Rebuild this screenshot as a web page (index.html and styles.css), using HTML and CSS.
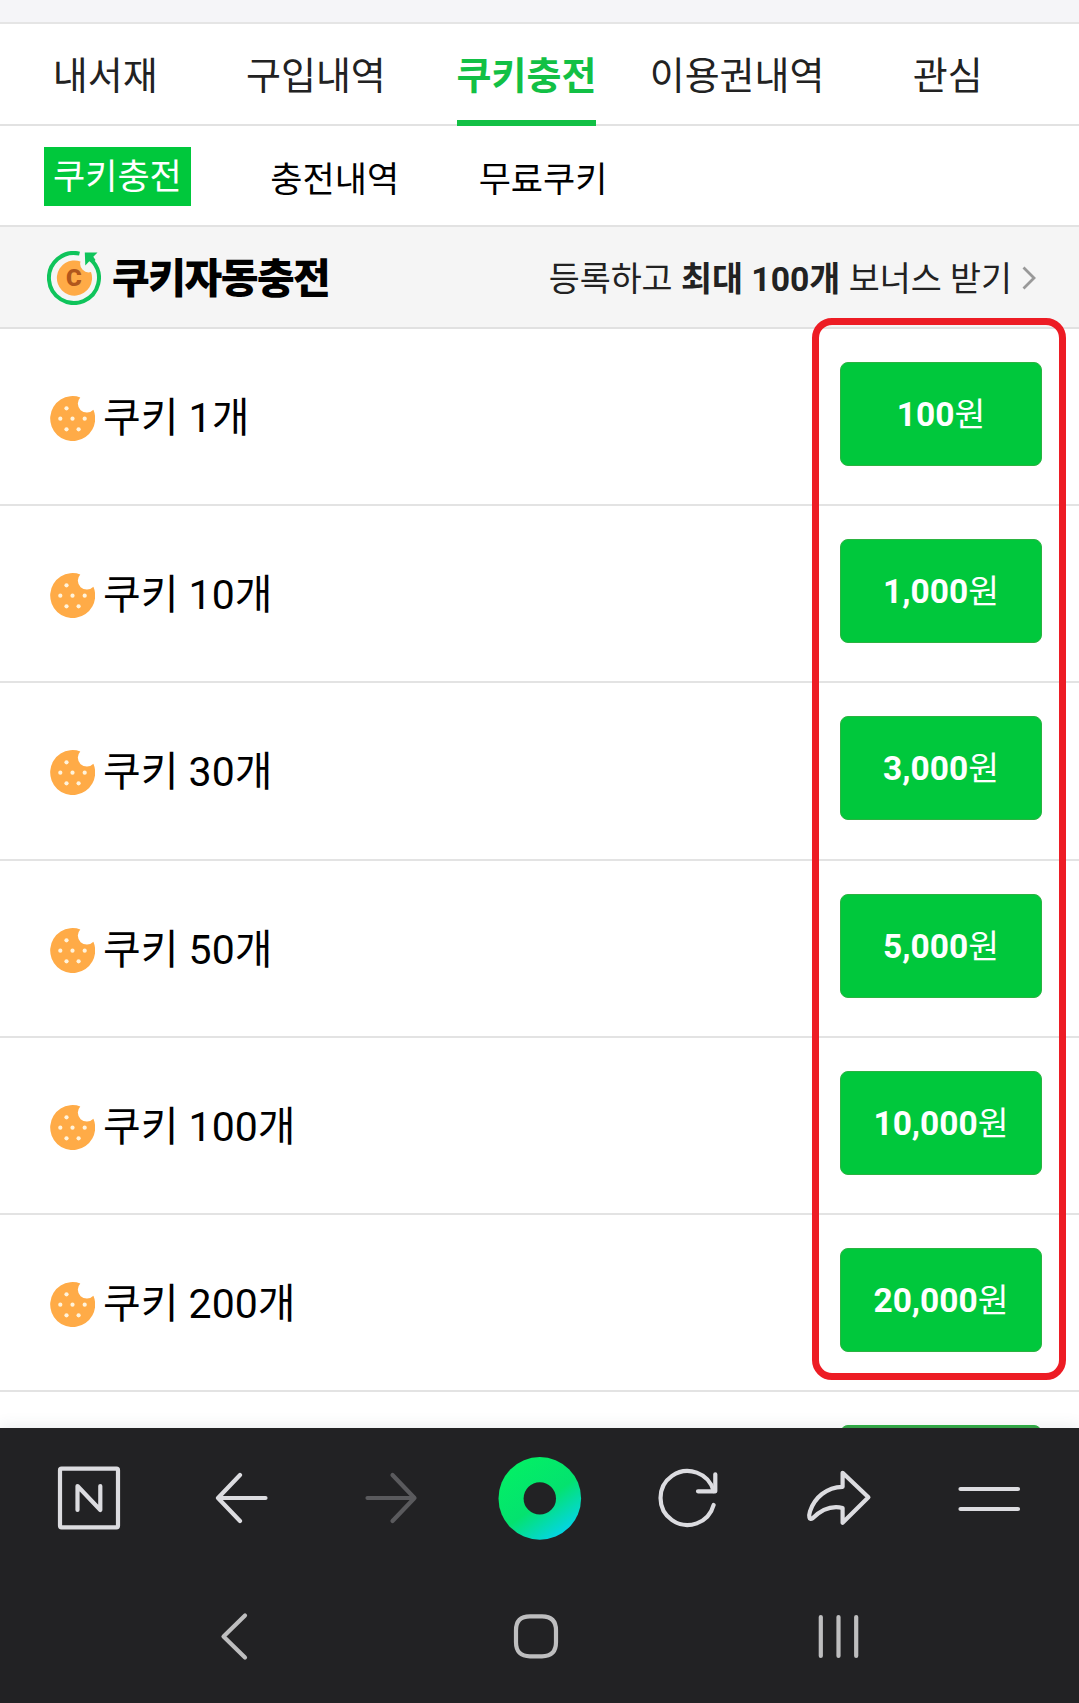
FILE: index.html
```html
<!DOCTYPE html>
<html lang="ko">
<head>
  <meta charset="UTF-8" />
  <meta name="viewport" content="width=device-width, initial-scale=1.0"/>
  <title>쿠키충전</title>
  <link rel="stylesheet" href="styles.css">
</head>
<body>
  <svg width="0" height="0" class="defs">
    <symbol id="cookie" viewBox="0 0 45 45">
      <path fill="#ffab47" d="M30.3 1.4A22.5 22.5 0 1 0 43.4 13.8A9 9 0 0 1 30.3 1.4Z"/>
      <g fill="#fff3dc">
        <circle cx="16.5" cy="12.3" r="2.1"/>
        <circle cx="10.3" cy="22.7" r="2.1"/>
        <circle cx="22.5" cy="22.7" r="2.1"/>
        <circle cx="34.7" cy="22.7" r="2.1"/>
        <circle cx="16.5" cy="33.3" r="2.1"/>
        <circle cx="28.6" cy="33.3" r="2.1"/>
      </g>
    </symbol>
  </svg>

  <div class="top-strip"></div>

  <nav class="tabs">
    <a class="tab"><span>내서재</span></a>
    <a class="tab"><span>구입내역</span></a>
    <a class="tab active"><span>쿠키충전</span></a>
    <a class="tab"><span>이용권내역</span></a>
    <a class="tab"><span>관심</span></a>
  </nav>

  <nav class="subtabs">
    <a class="subtab active">쿠키충전</a>
    <a class="subtab">충전내역</a>
    <a class="subtab">무료쿠키</a>
  </nav>

  <div class="banner">
    <svg class="auto-icon" viewBox="0 0 54 54">
      <path d="M32.5 2.6A25 25 0 1 0 46 10.8" fill="none" stroke="#0fc45b" stroke-width="4"/>
      <path d="M37.8 1.5H50.5L46.3 5.7L48.5 9L45 12.5L42.3 10.3L38.3 14.5Z" fill="#0fc45b"/>
      <path d="M33.5 10.5A17.6 17.6 0 1 0 44 21A8.5 8.5 0 0 1 33.5 10.5Z" fill="#ffab47"/>
      <text class="coin" x="26.8" y="35.3">C</text>
    </svg>
    <strong class="banner-title">쿠키자동충전</strong>
    <span class="banner-text">등록하고 <b>최대 100개</b> 보너스 받기</span>
    <svg class="chevron" viewBox="0 0 14 24"><path d="M1.5 1.5L12 12L1.5 22.5" fill="none" stroke="#999" stroke-width="2.8"/></svg>
  </div>

  <main class="list-wrap">
    <ul class="cookie-list">
      <li><svg class="cookie"><use href="#cookie"/></svg><span class="name">쿠키 1개</span><button class="price"><b>100</b>원</button></li>
      <li><svg class="cookie"><use href="#cookie"/></svg><span class="name">쿠키 10개</span><button class="price"><b>1,000</b>원</button></li>
      <li><svg class="cookie"><use href="#cookie"/></svg><span class="name">쿠키 30개</span><button class="price"><b>3,000</b>원</button></li>
      <li><svg class="cookie"><use href="#cookie"/></svg><span class="name">쿠키 50개</span><button class="price"><b>5,000</b>원</button></li>
      <li><svg class="cookie"><use href="#cookie"/></svg><span class="name">쿠키 100개</span><button class="price"><b>10,000</b>원</button></li>
      <li><svg class="cookie"><use href="#cookie"/></svg><span class="name">쿠키 200개</span><button class="price"><b>20,000</b>원</button></li>
      <li class="next"><button class="price"></button></li>
    </ul>
  </main>

  <div class="highlight"></div>

  <footer class="bottom">
    <div class="toolbar">
      <a><svg viewBox="0 0 84 84">
        <rect x="12" y="12.7" width="58" height="58.6" rx="1.5"/>
        <path d="M29.5 54V30L52.3 54V30"/>
      </svg></a>
      <a><svg viewBox="0 0 84 84"><path d="M67.5 42H20.5M42 19L20 42L42 65"/></svg></a>
      <a class="disabled"><svg viewBox="0 0 84 84"><path d="M19.5 42H66.5M44.5 19L66.5 42L44.5 65"/></svg></a>
      <a><svg viewBox="0 0 84 84">
        <defs>
          <linearGradient id="ring" x1="0.25" y1="0.1" x2="0.85" y2="0.95">
            <stop offset="0" stop-color="#03ee66"/>
            <stop offset="0.5" stop-color="#04e26f"/>
            <stop offset="1" stop-color="#04d3f5"/>
          </linearGradient>
        </defs>
        <circle class="ring" cx="41.8" cy="42.4" r="41.3"/>
        <circle class="hole" cx="41.8" cy="42.4" r="16.2"/>
      </svg></a>
      <a><svg viewBox="0 0 84 84">
        <path d="M65.6 49A27 27 0 1 1 65.6 35"/>
        <path d="M67.3 18.3V35.3H50"/>
      </svg></a>
      <a><svg viewBox="0 0 84 84"><path d="M44.6 16.8L70.4 41.3L44.6 66.8V52C32 49 22 55 14.6 62.3C11 64.8 10.6 59.8 12 55.3C16.6 41.3 28.6 31.3 44.6 30.8Z"/></svg></a>
      <a><svg viewBox="0 0 84 84"><path d="M12.5 33H70M12.5 53H70"/></svg></a>
    </div>
    <div class="sysbar">
      <a><svg viewBox="0 0 60 60"><path d="M41 9.5L19.5 30.5L41 51.5"/></svg></a>
      <a><svg viewBox="0 0 60 60"><path d="M24 10.3H36Q50 10.3 50 24.3V36.3Q50 50.3 36 50.3H24Q10 50.3 10 36.3V24.3Q10 10.3 24 10.3Z"/></svg></a>
      <a><svg viewBox="0 0 60 60"><path d="M11.8 11V50M29.5 11V50M47.2 11V50"/></svg></a>
    </div>
  </footer>
</body>
</html>
```
FILE: styles.css
```css
* { box-sizing: border-box; }

body {
  margin: 0;
  height: 1703px;
  display: flex;
  flex-direction: column;
  position: relative;
  overflow: hidden;
  background: #fff;
  color: #222;
  font-family: Roboto, "Noto Sans CJK KR", sans-serif;
}

.defs {
  position: absolute;
}

.top-strip {
  height: 24px;
  flex: none;
  background: #f5f5f8;
  border-bottom: 2px solid #e5e5e5;
}

/* Tabs */
.tabs {
  display: flex;
  flex: none;
  height: 102px;
  padding-right: 26px;
  border-bottom: 2px solid #e2e2e2;
}

.tab {
  flex: 1;
  display: flex;
  justify-content: center;
  font-size: 38px;
  line-height: 105px;
  white-space: nowrap;
}

.tab span {
  height: 102px;
}

.tab.active span {
  color: #12c045;
  font-weight: bold;
  border-bottom: 6px solid #12c045;
}

.subtabs {
  display: flex;
  align-items: center;
  flex: none;
  height: 101px;
  padding: 2px 0 0 44px;
  border-bottom: 2px solid #e2e2e2;
  gap: 79.5px;
}

.subtab {
  padding-top: 7px;
  font-size: 35px;
  line-height: 59px;
  color: #000;
}

.subtab.active {
  background: #00c83c;
  color: #fff;
  padding: 3px 9px 0;
  line-height: 56px;
}

/* Banner */
.banner {
  display: flex;
  align-items: center;
  flex: none;
  height: 102px;
  padding: 0 43px 0 47px;
  background: #f5f5f5;
  border-bottom: 2px solid #e1e1e1;
}

.auto-icon {
  width: 54px;
  height: 54px;
  margin-top: 2px;
}

.coin {
  fill: #b0561c;
  font-size: 24px;
  font-weight: 900;
  text-anchor: middle;
}

.banner-title {
  margin-left: 11px;
  padding-top: 4px;
  font-size: 41px;
  font-weight: 900;
  line-height: 60px;
  letter-spacing: -1.5px;
  color: #000;
}

.banner-text {
  margin-left: auto;
  padding-top: 6px;
  font-size: 33.7px;
  line-height: 60px;
}

.chevron {
  width: 14px;
  height: 24px;
  margin-top: 2px;
  margin-left: 10px;
}

/* Cookie list */
.list-wrap {
  flex: 1;
  min-height: 0;
  overflow: hidden;
}

.cookie-list {
  list-style: none;
  margin: 0;
  padding: 0;
}

.cookie-list li {
  display: flex;
  align-items: flex-start;
  height: 177.2px;
  padding: 33px 37px 0 50px;
  border-bottom: 2px solid #e3e3e3;
}

.cookie {
  width: 45px;
  height: 45px;
  margin-top: 34px;
}

.name {
  margin-left: 8px;
  margin-top: 26px;
  font-size: 41px;
  line-height: 60px;
  color: #000;
}

.price {
  width: 202px;
  height: 104px;
  margin-left: auto;
  padding: 0 0 5px;
  background: #00c83c;
  border: 1px solid #2bb341;
  border-radius: 8px;
  color: #fff;
  font-family: inherit;
  font-size: 33.5px;
}

.next .price {
  background: #36a548;
}

/* Marker around the price column */
.highlight {
  position: absolute;
  left: 812px;
  top: 318px;
  width: 254px;
  height: 1062px;
  border: 7px solid #ed1c24;
  border-radius: 20px;
}

/* Bottom bars */
.bottom {
  flex: none;
  height: 275px;
  background: #222224;
  box-shadow: 0 -2px 14px rgba(60,80,100,0.1);
  position: relative;
}

.toolbar {
  display: flex;
  height: 140px;
  padding: 0 14px 0 15px;
}

.toolbar a, .sysbar a {
  flex: 1;
  display: flex;
  align-items: center;
  justify-content: center;
}

.bottom svg {
  fill: none;
  stroke: #dcdce0;
  stroke-width: 4.2;
  stroke-linecap: round;
  stroke-linejoin: round;
}

.toolbar svg {
  width: 84px;
  height: 84px;
}

.toolbar .disabled svg {
  stroke: #5a5a5d;
}

.toolbar .ring {
  fill: url(#ring);
  stroke: none;
}

.toolbar .hole {
  fill: #222224;
  stroke: none;
}

.sysbar {
  display: flex;
  height: 135px;
  padding: 0 89px 0 83px;
}

.sysbar svg {
  width: 60px;
  height: 60px;
  stroke: #bebebf;
}
```
